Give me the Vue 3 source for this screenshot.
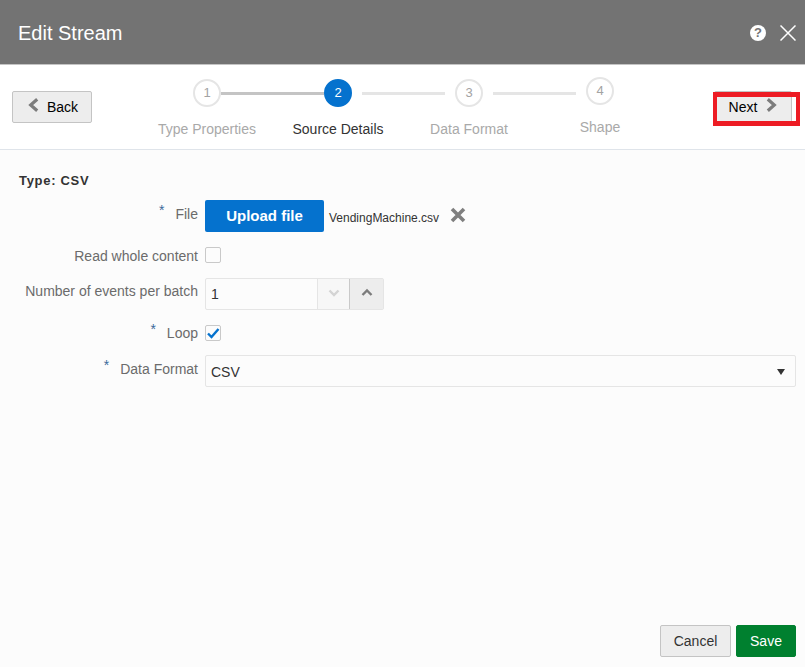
<template>
  <div class="dialog">
    <header class="title-bar">
      <h1 class="title">Edit Stream</h1>
      <div class="title-actions">
        <span class="help">?</span>
        <svg class="close" width="16" height="16" viewBox="0 0 16 16" aria-hidden="true">
          <path d="M.5.5l15 15M15.500.5l-15 15" stroke="#fff" stroke-width="1.500" fill="none" />
        </svg>
      </div>
    </header>

    <div class="train-bar">
      <button class="btn nav-btn back">
        <svg width="11" height="14" viewBox="0 0 11 14" aria-hidden="true">
          <path d="M9.200 1.200L2.700 7l6.500 5.800" fill="none" stroke="#7c7c7c" stroke-width="3.200" />
        </svg>
        <span>Back</span>
      </button>

      <div class="train">
        <div v-for="(s, i) in steps" :key="s.n" class="step" :class="{ raised: s.raised }">
          <div class="step-track">
            <span class="link before" :class="linkClass(i, 'before')"></span>
            <span class="dot" :class="{ active: s.active }">{{ s.n }}</span>
            <span class="link after" :class="linkClass(i, 'after')"></span>
          </div>
          <span class="step-label" :class="{ active: s.active }">{{ s.label }}</span>
        </div>
      </div>

      <div class="next-wrap">
        <button class="btn nav-btn next">
          <span>Next</span>
          <svg width="11" height="14" viewBox="0 0 11 14" aria-hidden="true">
            <path d="M1.800 1.200L8.300 7l-6.500 5.800" fill="none" stroke="#7c7c7c" stroke-width="3.200" />
          </svg>
        </button>
        <span class="callout"></span>
      </div>
    </div>

    <main class="content">
      <div class="type-line">Type: CSV</div>

      <div class="form">
        <div class="row row-file">
          <label class="label"><i>*</i>File</label>
          <div class="control">
            <button class="upload">Upload file</button>
            <span class="file-name">VendingMachine.csv</span>
            <svg class="remove" width="16" height="16" viewBox="0 0 16 16" aria-hidden="true">
              <path d="M2 2l12 12M14 2L2 14" stroke="#7f7f7f" stroke-width="3.600" fill="none" />
            </svg>
          </div>
        </div>

        <div class="row row-read">
          <label class="label">Read whole content</label>
          <div class="control"><span class="check"></span></div>
        </div>

        <div class="row row-number">
          <label class="label">Number of events per batch</label>
          <div class="control">
            <div class="spinner">
              <span class="spin-value">1</span>
              <span class="spin-btn down">
                <svg width="14" height="10" viewBox="0 0 14 10" aria-hidden="true">
                  <path d="M2.500 2.500L7 7l4.500-4.500" fill="none" stroke="#d4d4d4" stroke-width="2.400" />
                </svg>
              </span>
              <span class="spin-btn up">
                <svg width="14" height="10" viewBox="0 0 14 10" aria-hidden="true">
                  <path d="M2.500 8L7 3.500 11.500 8" fill="none" stroke="#7c7c7c" stroke-width="2.400" />
                </svg>
              </span>
            </div>
          </div>
        </div>

        <div class="row row-loop">
          <label class="label"><i>*</i>Loop</label>
          <div class="control">
            <span class="check">
              <svg width="14" height="14" viewBox="0 0 14 14" aria-hidden="true">
                <path d="M2 7.500l3.500 3.500L12.500 3" fill="none" stroke="#0572ce" stroke-width="2.400" />
              </svg>
            </span>
          </div>
        </div>

        <div class="row row-format">
          <label class="label"><i>*</i>Data Format</label>
          <div class="control">
            <div class="select">
              <span>CSV</span>
              <span class="caret"></span>
            </div>
          </div>
        </div>
      </div>

      <footer class="footer">
        <button class="btn cancel">Cancel</button>
        <button class="btn save">Save</button>
      </footer>
    </main>
  </div>
</template>

<script setup>
const steps = [
  { n: 1, label: 'Type Properties' },
  { n: 2, label: 'Source Details', active: true },
  { n: 3, label: 'Data Format' },
  { n: 4, label: 'Shape', raised: true },
]

function linkClass(i, side) {
  if (side === 'before') {
    if (i === 0) return 'hidden'
    return i === 1 ? 'done' : 'pending'
  }
  if (i === steps.length - 1) return 'hidden'
  return i === 0 ? 'done' : 'pending'
}
</script>

<style>
html, body { margin: 0; padding: 0; background: #fcfcfc; }
</style>

<style scoped>
.dialog {
  width: 805px;
  height: 667px;
  display: flex;
  flex-direction: column;
  font-family: "Liberation Sans", Arial, sans-serif;
  font-size: 14px;
  color: #333;
  background: #fcfcfc;
  overflow: hidden;
}

.title-bar {
  height: 65px;
  flex: none;
  box-sizing: border-box;
  background: #737373;
  border-bottom: 1px solid #c4c4c4;
  display: flex;
  align-items: center;
  justify-content: space-between;
  padding: 0 9px 0 18px;
}
.title {
  margin: 0;
  padding-top: 2px;
  font-size: 20px;
  font-weight: 400;
  color: #fff;
}
.title-actions {
  display: flex;
  align-items: center;
  gap: 14px;
  padding-top: 1px;
}
.help {
  width: 16px;
  height: 16px;
  border-radius: 50%;
  background: #fff;
  color: #737373;
  font-size: 13px;
  font-weight: 700;
  line-height: 16px;
  text-align: center;
}

.train-bar {
  height: 85px;
  flex: none;
  box-sizing: border-box;
  background: #fff;
  border-bottom: 1px solid #dfe4ea;
  display: flex;
  align-items: flex-start;
  padding: 26px 0 0 12px;
}

.btn {
  font-family: inherit;
  font-size: 14px;
  height: 32px;
  box-sizing: border-box;
  border: 1px solid #c4c4c4;
  border-radius: 2px;
  background: #ededed;
  color: #000;
  padding: 0;
}
.nav-btn {
  display: flex;
  align-items: center;
  justify-content: center;
}
.nav-btn svg { margin-bottom: 4px; }
.back { width: 80px; gap: 8px; padding-left: 2px; }
.next { width: 78px; gap: 9px; }

.train {
  width: 524px;
  margin-left: 49.500px;
  margin-top: -12px;
  display: flex;
}
.step {
  flex: 1;
  display: flex;
  flex-direction: column;
  align-items: center;
}
.step-track {
  width: 100%;
  display: flex;
  align-items: flex-start;
}
.link {
  width: 51.500px;
  height: 3px;
  flex: none;
  box-sizing: content-box;
  margin-top: 12.500px;
  background: #e5e5e5;
  background-clip: content-box;
}
.link.before { width: 41.500px; padding-right: 10px; }
.link.after { width: 41.500px; padding-left: 10px; }
.link.done { width: 51.500px; padding: 0; background: #c4c4c4; }
.link.hidden { visibility: hidden; }
.dot {
  width: 28px;
  height: 28px;
  flex: none;
  box-sizing: border-box;
  border: 2px solid #e5e5e5;
  border-radius: 50%;
  background: #fff;
  color: #a3a3a3;
  font-size: 13px;
  line-height: 24px;
  text-align: center;
}
.raised .dot { margin-top: -2px; }
.dot.active {
  background: #0572ce;
  border-color: #0572ce;
  color: #fff;
}
.step-label {
  margin-top: 14px;
  line-height: 16px;
  color: #a9a9a9;
}
.step-label.active { color: #333; }

.next-wrap {
  position: relative;
  margin-left: 48.500px;
}
.callout {
  position: absolute;
  left: -1px;
  top: 1px;
  width: 87px;
  height: 34px;
  box-sizing: border-box;
  border-style: solid;
  border-color: #ed1c24;
  border-width: 5px 4px;
  pointer-events: none;
}

.content {
  flex: 1;
  display: flex;
  flex-direction: column;
  min-height: 0;
  padding: 0 9px 10px 19px;
}
.type-line {
  margin-top: 23px;
  line-height: 16px;
  font-size: 13px;
  font-weight: 700;
  letter-spacing: .7px;
  color: #333;
}

.form {
  display: flex;
  flex-direction: column;
  margin-top: 11px;
}
.row {
  display: flex;
  align-items: center;
  height: 32px;
}
.row-read, .row-loop { height: 16px; }
.row-read, .row-number, .row-loop { margin-top: 15px; }
.row-format { margin-top: 14px; }
.label {
  width: 179px;
  flex: none;
  text-align: right;
  color: #6b6b6b;
  line-height: 16px;
}
.row-file .label, .row-format .label { margin-bottom: 4px; }
.row-read .label { margin-top: 2px; }
.row-number .label { margin-bottom: 6px; }
.label i {
  font-style: normal;
  color: #3a6a9a;
  margin-right: 11px;
  position: relative;
  top: -4px;
}
.control {
  margin-left: 7px;
  flex: 1;
  display: flex;
  align-items: center;
}

.upload {
  width: 119px;
  height: 32px;
  border: 0;
  border-radius: 2px;
  background: #0572ce;
  color: #fff;
  font-family: inherit;
  font-size: 15px;
  font-weight: 700;
  padding: 0 0 2px;
}
.file-name {
  margin-left: 5px;
  margin-top: 3px;
  font-size: 12px;
  color: #333;
}
.remove { margin: 0 0 2px 11px; }

.check {
  width: 16px;
  height: 16px;
  box-sizing: border-box;
  border: 1px solid #c9c9c9;
  border-radius: 2px;
  display: flex;
  align-items: center;
  justify-content: center;
}

.spinner {
  width: 179px;
  height: 32px;
  box-sizing: border-box;
  border: 1px solid #e5e5e5;
  border-radius: 2px;
  display: flex;
}
.spin-value {
  flex: 1;
  padding-left: 5px;
  line-height: 31px;
  color: #333;
}
.spin-btn {
  width: 33px;
  display: flex;
  align-items: center;
  justify-content: center;
  box-sizing: border-box;
}
.spin-btn.down {
  background: #f7f7f7;
  border-left: 1px solid #e5e5e5;
  border-right: 1px solid #c9c9c9;
  padding-bottom: 2px;
}
.spin-btn.up { background: #ededed; padding-bottom: 4px; }

.select {
  width: 591px;
  height: 32px;
  box-sizing: border-box;
  border: 1px solid #e5e5e5;
  border-radius: 2px;
  display: flex;
  align-items: center;
  justify-content: space-between;
  padding: 2px 10px 0 5px;
  color: #333;
}
.caret {
  width: 0;
  height: 0;
  border-left: 4.500px solid transparent;
  border-right: 4.500px solid transparent;
  border-top: 6px solid #333;
}

.footer {
  margin-top: auto;
  display: flex;
  justify-content: flex-end;
  gap: 5px;
}
.cancel { width: 71px; color: #333; }
.save {
  width: 60px;
  background: #00802f;
  border-color: #00802f;
  color: #fff;
}
</style>
